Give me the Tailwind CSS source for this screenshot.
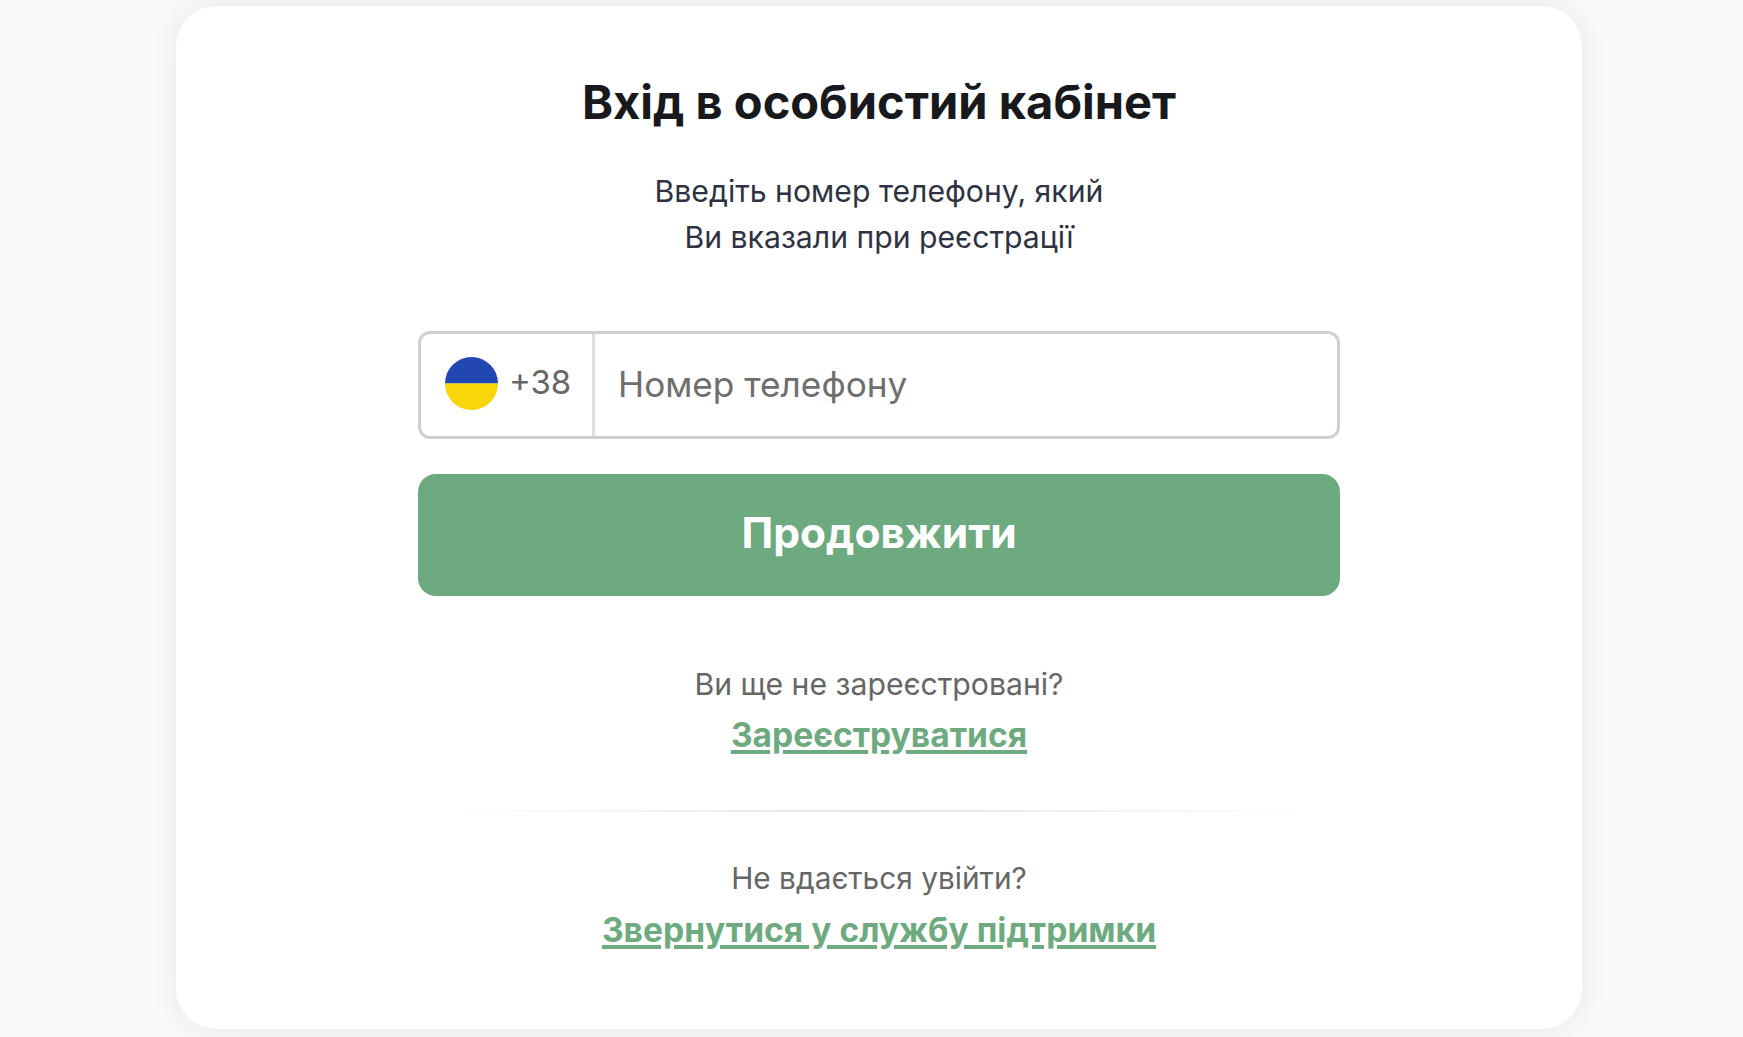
<!DOCTYPE html>
<html lang="uk">
  <head>
    <meta charset="UTF-8" />
    <title>Вхід</title>
    <script src="https://cdn.jsdelivr.net/npm/@tailwindcss/browser@4"></script>
  </head>
  <body class="bg-[#f9f9fa] h-[1037px] overflow-hidden font-['Inter',sans-serif]">
    <!-- Card -->
    <main class="w-[1406px] h-[1023px] ml-[176px] mt-[6px] bg-white rounded-[40px] shadow-[0_0_30px_rgba(0,0,0,0.07)] flex flex-col items-center pt-[62px]">
      <h1 class="text-[47px] leading-[68px] font-bold text-[#18191c]">Вхід в особистий кабінет</h1>
      <p class="mt-[32px] text-[30.2px] leading-[46px] text-[#2f3242] text-center">
        Введіть номер телефону, який<br />Ви вказали при реєстрації
      </p>

      <!-- Phone input -->
      <div class="mt-[71px] w-[922px] h-[108px] flex border-[3px] border-[#d0d0d0] rounded-[12px]">
        <div class="w-[174px] flex items-center pl-[24px] gap-[11px] border-r-[3px] border-[#dedede]">
          <svg class="-mt-[3px]" width="53" height="53" viewBox="0 0 53 53">
            <clipPath id="c"><circle cx="26.5" cy="26.5" r="26.5" /></clipPath>
            <g clip-path="url(#c)">
              <rect width="53" height="26.5" fill="#2247b3" />
              <rect y="26.5" width="53" height="26.5" fill="#f9d607" />
            </g>
          </svg>
          <span class="text-[33px] text-[#666] -mt-[4px]">+38</span>
        </div>
        <div class="flex-1 flex items-center pl-[23px] pb-[2px] text-[35.2px] text-[#6e6e6e]">Номер телефону</div>
      </div>

      <button class="mt-[35px] w-[922px] h-[122px] rounded-[18px] bg-[#6eaa80] text-white text-[42.5px] font-bold pb-[5px]">Продовжити</button>

      <p class="mt-[66px] text-[30.2px] leading-[44px] text-[#666]">Ви ще не зареєстровані?</p>
      <a class="mt-[7px] text-[33.6px] leading-[44px] font-bold text-[#6eaa80] underline decoration-[4px] underline-offset-[3px]">Зареєструватися</a>

      <div class="mt-[53px] w-[890px] h-[2px] bg-gradient-to-r from-transparent via-[#e4e4e4] to-transparent"></div>

      <p class="mt-[44px] text-[29.8px] leading-[44px] text-[#666]">Не вдається увійти?</p>
      <a class="mt-[8px] text-[33.6px] leading-[44px] font-bold text-[#6eaa80] underline decoration-[4px] underline-offset-[3px]">Звернутися у службу підтримки</a>
    </main>
  </body>
</html>
